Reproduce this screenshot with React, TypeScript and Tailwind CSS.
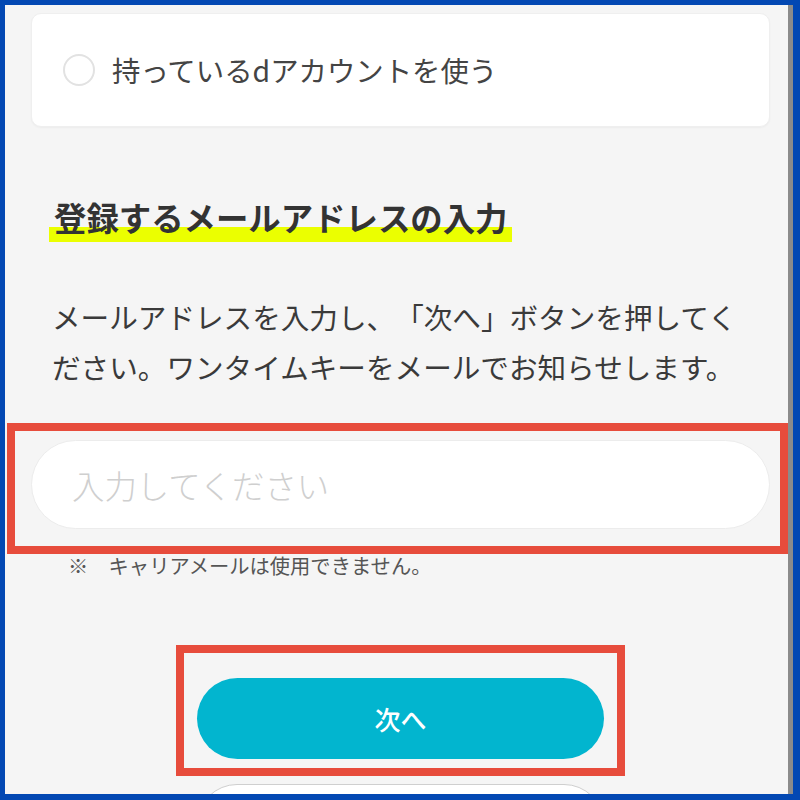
import React from "react";

const jp = "font-['Noto_Sans_CJK_JP','Noto_Sans',sans-serif] [text-spacing-trim:space-all]";

export default function App() {
  return (
    <div className={`w-[800px] h-[800px] flex bg-[#0348b3] pt-[5px] pl-[5px] pb-[6px] pr-[7px] ${jp}`}>
      <div className="flex-1 flex">
        <div className="flex-1 bg-[#f5f5f5] overflow-hidden">
          {/* account option card */}
          <div className="mt-[8px] ml-[26px] w-[739px] h-[114px] bg-white rounded-[10px] border border-[#efefef] shadow-[0_1px_2px_rgba(0,0,0,0.04)] flex items-center pl-[31px]">
            <span className="w-[32px] h-[32px] rounded-full border-2 border-[#e2e2e2] bg-white shrink-0" />
            <span className="ml-[17px] text-[28.4px] leading-none text-[#444]">
              持っているdアカウントを使う
            </span>
          </div>

          <h2 className="mt-[64px] ml-[44px]">
            <span className="inline-block px-[5px] text-[32.4px] leading-[51px] font-bold text-[#333] bg-[linear-gradient(transparent_70%,#ebff00_70%)]">
              登録するメールアドレスの入力
            </span>
          </h2>

          <p className="mt-[50px] ml-[47px] text-[28.6px] leading-[50px] text-[#3a3a3a]">
            メールアドレスを入力し、「次へ」ボタンを押してく
            <br />
            ださい。ワンタイムキーをメールでお知らせします。
          </p>

          <div className="mt-[31px] ml-[2px] w-[781px] border-8 border-[#e74c3c] pt-[9px] pl-[16px] pr-[10px] pb-[17px]">
            <input
              className="w-[739px] h-[89px] rounded-full bg-white border border-[#ececec] pl-[40px] text-[32.4px] font-light text-[#333] placeholder:text-[#cfcfcf] outline-none"
              placeholder="入力してください"
            />
          </div>

          <p className="mt-[1px] ml-[63px] text-[20.3px] leading-[20px] text-[#555]">
            ※　キャリアメールは使用できません。
          </p>

          <div className="mt-[70px] ml-[171px] w-[449px] border-8 border-[#e74c3c] pt-[25px] px-[13px] pb-[9px]">
            <button className="w-full h-[81px] rounded-full bg-[#02b5cf] text-white text-[26px] font-medium">
              次へ
            </button>
          </div>

          {/* secondary button, cut off by the bottom edge */}
          <div className="mt-[8px] ml-[192px] w-[407px] h-[80px] rounded-full bg-white border border-[#cfcfcf]" />
        </div>
        <div className="w-[5px] bg-[#8b8b8b]" />
      </div>
    </div>
  );
}
